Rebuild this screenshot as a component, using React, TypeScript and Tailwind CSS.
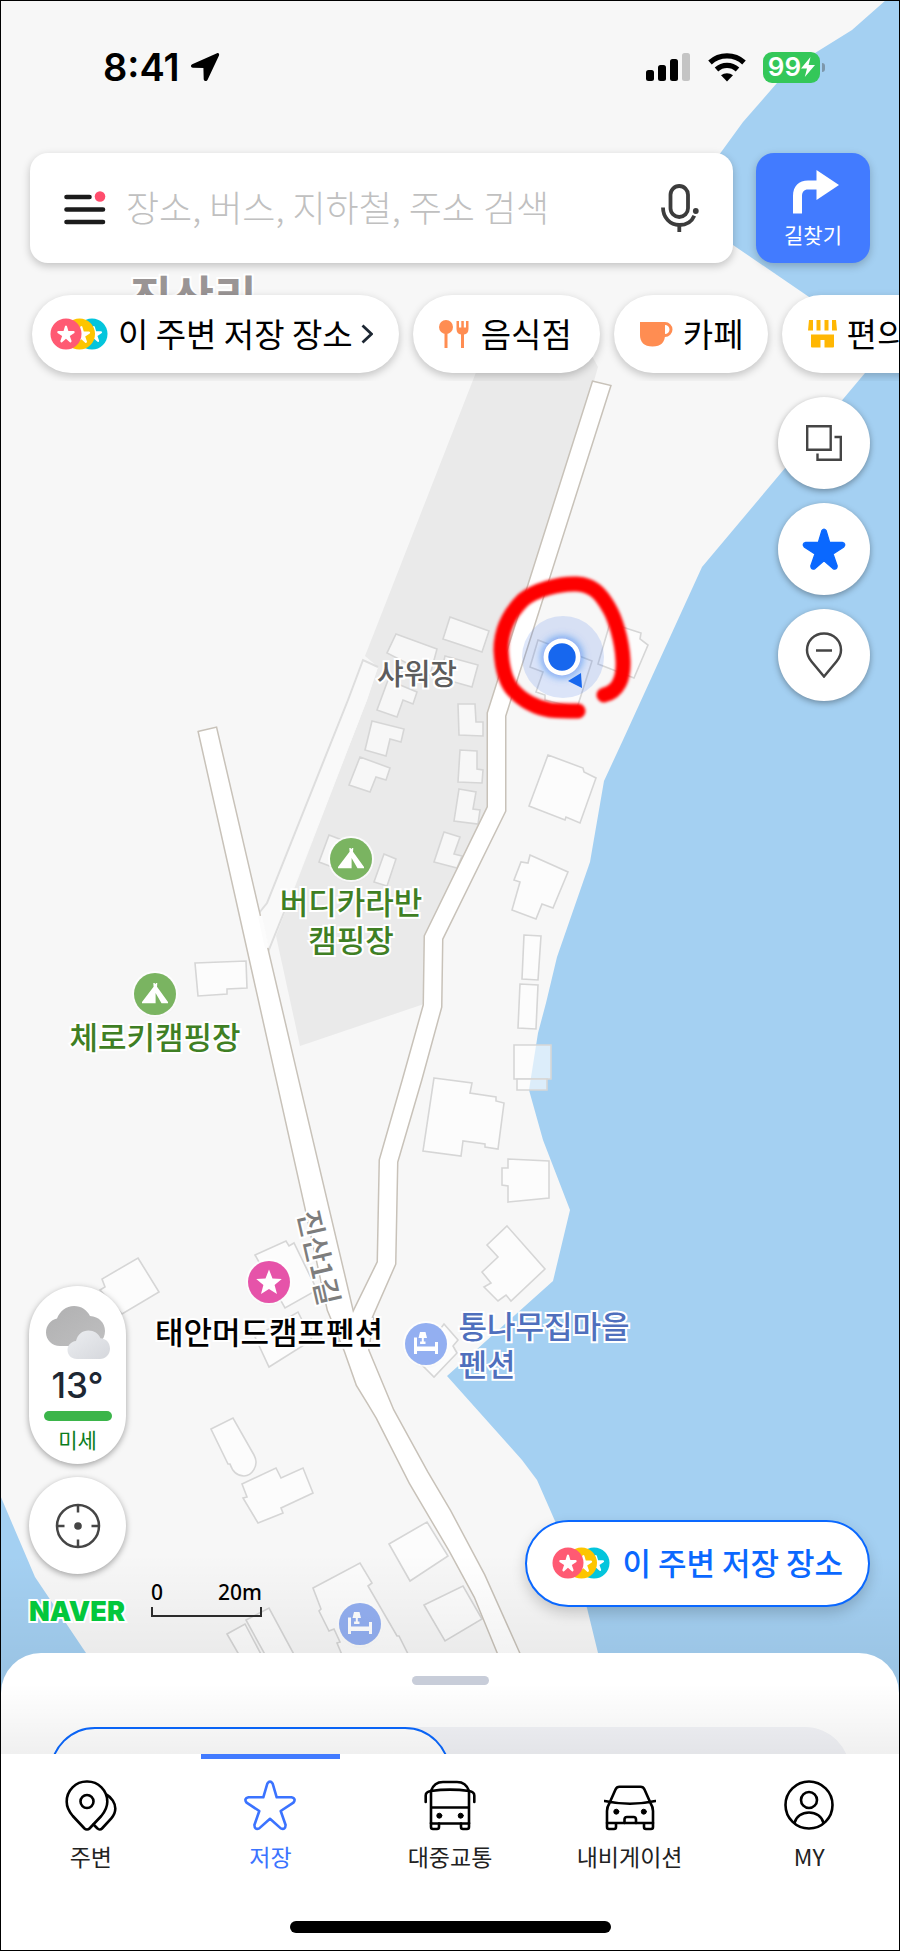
import React, { useState } from 'react';
import clsx from 'clsx';

const MAP_WIDTH = 898;
const MAP_HEIGHT = 1753;

const STAR =
  'M23.4 4.4Q26 .8 28.6 4.4L32.7 18.3H47.5Q52.5 19.6 49.4 23.6L36.7 32 41.6 46Q41.4 51.2 36.8 49.4L26 39.8 15.2 49.4Q10.6 51.2 10.4 46L15.3 32 2.6 23.6Q-.5 19.6 4.5 18.3H19.3Z';

const water = [
  'M886 0 852 30 815 53 777 83 743 122 719 155 705 185 733 245 885 349 865 373 702 567 623 740 604 781 590 862 557 957 546 1003 538 1033 529 1090 543 1140 570 1210 553 1281 447 1376 522 1460 537 1480 555 1521 587 1608 598 1653 612 1754H900V0Z',
  'M0 1495 35 1577 86 1653 120 1754H0Z',
];

const roads = [
  'M199 732 216 728 259 913 268 952 298 1080 353 1313 373 1318 368 1350 393 1410 427 1472 450 1511 484 1575 519 1653 540 1700H518L498 1653 475 1597 450 1551 410 1483 377 1418 368 1403 357 1385 345 1351 328 1310 305 1205 277 1080Z',
  'M593 382 610 386 505 716V811L442 939 441 1007 421 1080 397 1162 395 1264 366 1330 340 1340 353 1313 378 1262 380 1160 403 1080 424 1005 425 936 488 807V713Z',
];

const buildings = [
  '450,617 489,631 482,652 443,639',
  '396,634 437,649 430,675 387,653',
  '445,656 478,665 472,687 440,678',
  '388,680 417,692 413,704 403,700 397,717 377,710',
  '372,721 404,729 401,742 390,739 386,756 365,750',
  '360,757 390,768 386,780 376,777 370,792 349,785',
  '458,704 475,704 476,722 483,722 483,736 459,735',
  '460,750 477,751 477,769 483,770 482,783 458,782',
  '459,789 476,792 473,809 480,810 478,824 454,821',
  '444,832 460,837 454,854 462,856 457,868 434,862',
  '548,755 583,768 584,772 596,778 580,823 566,817 565,820 529,806',
  '530,855 568,872 553,908 542,904 536,919 512,910 520,882 514,880 521,862 528,863',
  '524,935 541,936 538,980 522,979',
  '520,984 538,985 536,1029 518,1028',
  '514,1045 551,1045 551,1079 514,1079',
  '517,1079 547,1079 547,1090 517,1090',
  '434,1078 472,1083 470,1093 496,1097 496,1101 504,1103 498,1149 485,1147 485,1144 463,1141 461,1156 423,1151',
  '508,1159 549,1161 549,1198 508,1202 508,1186 502,1185 502,1168 508,1168',
  '507,1226 545,1269 511,1301 506,1295 498,1301 484,1287 491,1283 482,1272 498,1257 487,1245',
  '444,1324 458,1340 453,1346 457,1353 434,1377 417,1360',
  '610,623 641,633 640,639 648,645 634,678 598,664',
  '538,640 592,661 577,708 545,700 545,695 536,692 543,672 530,667',
  '195,963 246,961 247,988 227,989 227,994 198,996',
  '329,835 350,843 340,870 319,862',
  '384,854 396,859 387,886 374,882',
  '138,1258 159,1292 122,1314 100,1290 105,1287 102,1279',
  '255,1255 286,1241 289,1246 294,1243 317,1290 285,1308',
  '255,1337 298,1312 312,1340 269,1367',
  '242,1484 276,1468 281,1478 303,1468 313,1493 281,1508 283,1513 258,1523 243,1498 247,1497',
  '389,1544 427,1522 448,1556 410,1581',
  '424,1605 463,1586 482,1619 445,1641',
  '313,1588 360,1563 372,1583 368,1586 397,1636 399,1636 412,1662 345,1662 337,1643 340,1642 334,1629 329,1631 319,1611 321,1609',
  '246,1620 269,1608 297,1660 268,1660',
  '227,1634 245,1624 264,1660 242,1660',
];

type PinKind = 'tent' | 'bed' | 'star';

const pins: { id: number; kind: PinKind; x: number; y: number; name: string }[] = [
  { id: 1, kind: 'tent', x: 351, y: 859, name: '버디카라반 캠핑장' },
  { id: 2, kind: 'tent', x: 155, y: 994, name: '체로키캠핑장' },
  { id: 3, kind: 'star', x: 269, y: 1282, name: '태안머드캠프펜션' },
  { id: 4, kind: 'bed', x: 426, y: 1344, name: '통나무집마을 펜션' },
  { id: 5, kind: 'bed', x: 360, y: 1624, name: '숙소' },
];

const labels = [
  { id: 1, x: 193, y: 294, lines: ['진산리'], className: 'text-[46px] leading-[48px] font-bold text-[#9a9595]' },
  { id: 2, x: 417, y: 672, lines: ['샤워장'], className: 'text-[29px] leading-[38px] font-medium text-[#5c5c5c]' },
  { id: 3, x: 351, y: 920, lines: ['버디카라반', '캠핑장'], className: 'text-[31px] leading-[38px] font-medium text-[#3f7f24]' },
  { id: 4, x: 155, y: 1036, lines: ['체로키캠핑장'], className: 'text-[31px] leading-[38px] font-medium text-[#3f7f24]' },
  { id: 5, x: 269, y: 1331, lines: ['태안머드캠프펜션'], className: 'text-[31px] leading-[38px] font-medium text-black' },
  { id: 6, x: 544, y: 1344, lines: ['통나무집마을', '펜션'], className: 'text-left text-[31px] leading-[38px] font-medium text-[#4f6fbd]' },
];

const toPercent = (x: number, y: number) => ({
  left: `${((x - 1) / MAP_WIDTH) * 100}%`,
  top: `${((y - 1) / MAP_HEIGHT) * 100}%`,
});

function PinIcon({ kind }: { kind: PinKind }) {
  if (kind === 'tent') {
    return (
      <svg viewBox="0 0 42 42" className="w-[42px] h-[42px]">
        <circle cx="21" cy="21" r="21" fill="#7ab461" />
        <path d="M19.3 10h1.2l.8 1 .9-1h1.1l-.3 3.8L34 29v1.2h-6.5L21.6 20v10.2H8V29l11.6-15.2z" fill="#fff" />
      </svg>
    );
  }
  if (kind === 'star') {
    return (
      <svg viewBox="0 0 42 42" className="w-[42px] h-[42px]">
        <circle cx="21" cy="21" r="21" fill="#e653a9" />
        <path d="m21 8.5 3.5 8.9 9.3.6-7.2 6 2.4 9.1-8-5.1-8 5.1 2.4-9.1-7.2-6 9.3-.6z" fill="#fff" />
      </svg>
    );
  }
  return (
    <svg viewBox="0 0 42 42" className="w-[42px] h-[42px]">
      <circle cx="21" cy="21" r="21" fill="#93aff1" />
      <path d="M9 14.5h3v9h18V19h3v12h-3v-3H12v3H9zM15 9h5.5l1.5 6h-3.2v3.5h1.7V21h-5.4v-2.500h1.700V15h-3.300z" fill="#fff" />
    </svg>
  );
}

function MapCanvas() {
  return (
    <div className="absolute inset-0 overflow-hidden">
      <svg viewBox={`1 1 ${MAP_WIDTH} ${MAP_HEIGHT}`} preserveAspectRatio="xMidYMin slice" className="w-full h-full">
        <defs>
          <filter id="soft" x="-20%" y="-20%" width="140%" height="140%">
            <feGaussianBlur stdDeviation="1.8" />
          </filter>
          <filter id="glow" x="-50%" y="-50%" width="200%" height="200%">
            <feGaussianBlur stdDeviation="4" />
          </filter>
        </defs>
        {water.map((d) => (
          <path key={d} d={d} fill="#a4d0f2" />
        ))}
        <path d="M484 352 590 352 598 367 560 500 488 713 490 805 425 936 424 1004 300 1046 276 936 367 700 378 667 365 656Z" fill="#eaeaea" />
        <path d="M363 660 378 667 367 700 293 890 268 952 259 913 267 903 348 700Z" fill="#f9f9f9" />
        <path d="M378 667 363 660 348 700 267 903 259 913M268 952 293 890" fill="none" stroke="#dedede" strokeWidth="2" />
        <g fill="#fff" fillOpacity=".62" stroke="#d6d6d6" strokeWidth="1.6">
          {buildings.map((points) => (
            <polygon key={points} points={points} />
          ))}
          <path d="M211 1429 233 1418 254 1455C260 1466 251 1476 244 1476 236 1476 232 1470 230 1464L228 1464Z" />
        </g>
        <g stroke="#c8c2b9" strokeWidth="3" fill="none">
          {roads.map((d) => (
            <path key={d} d={d} />
          ))}
        </g>
        {roads.map((d) => (
          <path key={d} d={d} fill="#fff" />
        ))}
        <path d="M260 916 267 948" stroke="#fcfcfc" strokeWidth="4" />
        <text
          transform="translate(321 1257) rotate(77)"
          textAnchor="middle"
          dominantBaseline="central"
          fontSize="29"
          fontWeight="500"
          fontFamily='"Noto Sans CJK KR", sans-serif'
          fill="#7d7d7d"
          stroke="#fff"
          strokeWidth="4"
          paintOrder="stroke"
        >
          진산1길
        </text>

        {/* current position */}
        <circle cx="563" cy="657" r="41" fill="#2f6be8" fillOpacity=".16" />
        <circle cx="562" cy="657" r="20" fill="#1767ee" fillOpacity=".6" filter="url(#glow)" />
        <circle cx="562" cy="657" r="18.5" fill="#fff" />
        <circle cx="562" cy="657" r="13.7" fill="#1767ee" />
        <path d="M568 681 581 673 582 688Z" fill="#1767ee" />
        <path
          d="M604 695C618 692 624 678 623 660 622 640 615 618 609 608 600 592 592 585 577 584 560 583 535 590 523 600 508 615 501 630 501 650 502 668 505 682 514 691 522 700 536 708 550 710 560 711 568 711 578 711"
          fill="none"
          stroke="#fe0000"
          strokeWidth="15"
          strokeLinecap="round"
          filter="url(#soft)"
        />
      </svg>

      {labels.map((label) => (
        <p
          key={label.id}
          style={toPercent(label.x, label.y)}
          className={clsx(
            'absolute -translate-x-1/2 -translate-y-1/2 text-center whitespace-nowrap [-webkit-text-stroke:4px_#fff] [paint-order:stroke_fill]',
            label.className
          )}
        >
          {label.lines.map((line) => (
            <span key={line} className="block">{line}</span>
          ))}
        </p>
      ))}
      {pins.map((pin) => (
        <button
          key={pin.id}
          aria-label={pin.name}
          style={toPercent(pin.x, pin.y)}
          className="absolute -translate-x-1/2 -translate-y-1/2 rounded-full ring-2 ring-white/80 shadow-sm"
        >
          <PinIcon kind={pin.kind} />
        </button>
      ))}
      <div className="absolute inset-x-0 bottom-0 h-[200px] bg-linear-to-b from-transparent to-black/10" />
    </div>
  );
}

function StatusBar() {
  return (
    <div className="h-[152px] pt-[41px] pl-[102px] pr-[74px]">
      <div className="flex h-[50px] items-center justify-between">
        <div className="flex items-center gap-2.5 font-[Inter] text-[38px] font-semibold text-black">
          <span>8:41</span>
          <svg viewBox="0 0 30 30" className="w-[30px] h-[30px]">
            <path d="M27 1.2 2.2 12.3C.2 13.3.8 15.6 2.8 15.7l10.6.3.3 11c.1 2.3 3 2.8 3.9.8L29 3.4C29.6 1.8 28.5.6 27 1.2z" />
          </svg>
        </div>
        <div className="flex items-center gap-[17px]">
          <svg viewBox="0 0 46 30" className="w-[46px] h-[30px]">
            <rect x="1" y="18" width="8" height="11" rx="2.5" />
            <rect x="13" y="13" width="8" height="16" rx="2.5" />
            <rect x="25" y="7" width="8" height="22" rx="2.5" />
            <rect x="37" y="1" width="8" height="28" rx="2.5" fill="#c4c4c4" />
          </svg>
          <svg viewBox="0 0 38 29" className="w-[38px] h-[29px]">
            <path d="M2 9.5C11.5.7 26.5.7 36 9.5" fill="none" stroke="#000" strokeWidth="5.2" />
            <path d="M8.5 16.500c6-5.500 15-5.500 21 0" fill="none" stroke="#000" strokeWidth="5.2" />
            <path d="M19 28.500 13 22.300c3.400-2.900 8.600-2.900 12 0z" />
          </svg>
          <div className="flex items-center gap-0.5">
            <div className="flex h-[31px] w-[57px] items-center justify-center rounded-[9px] bg-[#34c759] font-[Inter] text-[26px] leading-none font-semibold text-white">
              99
              <svg viewBox="0 0 14 20" className="w-[14px] h-[20px]" fill="#fff">
                <path d="M9.5 0 0 11.500h6L3.800 20 14 8H7.600z" />
              </svg>
            </div>
            <span className="h-[9px] w-[3px] rounded-r-full bg-[#7d97ab]" />
          </div>
        </div>
      </div>
    </div>
  );
}

function SavedCoins() {
  return (
    <svg viewBox="0 0 58 32" className="w-[58px] h-[32px] shrink-0">
      <circle cx="42" cy="16" r="15.5" fill="#04c5dc" />
      <path transform="translate(35 7) scale(.34)" d={STAR} fill="#fff" />
      <circle cx="29.5" cy="16" r="15.5" fill="#fdc500" />
      <path transform="translate(22 7) scale(.36)" d={STAR} fill="#fff" />
      <circle cx="16" cy="16" r="15.5" fill="#ff5a73" />
      <path transform="translate(6.6 6.5) scale(.36)" d={STAR} fill="#fff" />
    </svg>
  );
}

function SearchHeader() {
  return (
    <header className="flex gap-[23px] px-[29px]">
      <form className="flex h-[110px] min-w-0 flex-1 items-center gap-5 rounded-[18px] bg-white px-[34px] shadow-[0_3px_8px_rgba(0,0,0,0.22)]">
        <button type="button" aria-label="메뉴" className="shrink-0">
          <svg viewBox="0 0 42 34" className="w-[42px] h-[34px]">
            <path d="M2.500 6h23M2.500 18.500H39M2.500 31H39" stroke="#1b1b1b" strokeWidth="4.6" strokeLinecap="round" />
            <circle cx="36" cy="5.5" r="5.3" fill="#ff4d6d" />
          </svg>
        </button>
        <input
          type="text"
          aria-label="검색"
          placeholder="장소, 버스, 지하철, 주소 검색"
          className="min-w-0 flex-1 bg-transparent pb-1 text-[36px] font-light text-black outline-none placeholder:text-[#c0c0c0]"
        />
        <button type="button" aria-label="음성 검색" className="shrink-0">
          <svg viewBox="0 0 38 48" className="w-[38px] h-[48px]" fill="none" stroke="#3c3c3c" strokeWidth="3.8">
            <rect x="9.5" y="2" width="17.5" height="31" rx="8.7" />
            <path d="M2 23.500c0 10 7 17.500 16.300 17.500 7 0 12.500-3.500 15-9.300M18.300 41v7" />
            <circle cx="34.8" cy="27" r="2.9" fill="#3c3c3c" stroke="none" />
          </svg>
        </button>
      </form>
      <button className="flex h-[110px] w-[114px] shrink-0 flex-col items-center rounded-[18px] bg-[#427bff] pt-[17px] text-white shadow-[0_3px_8px_rgba(0,0,0,0.22)]">
        <svg viewBox="-6 0 52 44" className="w-[52px] h-[44px]" fill="#fff">
          <path d="M0 43.500V26C0 16 6 10.500 15 10.500h8.500V0L46 15 23.500 30V19.500H15c-4 0-6 2.500-6 6.500v17.500z" />
        </svg>
        <span className="mt-1.5 text-[21px] leading-7">길찾기</span>
      </button>
    </header>
  );
}

const chipClass =
  'flex h-[78px] shrink-0 items-center gap-[10px] rounded-full bg-white text-[33px] whitespace-nowrap text-black shadow-[0_3px_8px_rgba(0,0,0,0.22)]';

function CategoryChips() {
  return (
    <div className="mt-6 flex gap-[14px] overflow-hidden py-2 pl-[31px]">
      <button className={clsx(chipClass, 'pr-[26px] pl-[18px]')}>
        <SavedCoins />
        <span className="flex items-center gap-2">
          이 주변 저장 장소
          <svg viewBox="0 0 12 20" className="w-[12px] h-[20px]" fill="none" stroke="#1d2733" strokeWidth="2.8">
            <path d="m1.500 1.500 9 8.500-9 8.500" />
          </svg>
        </span>
      </button>
      <button className={clsx(chipClass, 'pr-7 pl-[26px]')}>
        <svg viewBox="0 0 32 28" className="w-[32px] h-[28px]" fill="#ff8d52">
          <circle cx="7" cy="7" r="7" />
          <path d="M5.500 12h3v16h-3zM17.500 1h2.500v6.500h2.300V1h2.500v6.500H27V1h2.500v8c0 3.500-1.800 5-4.500 5.500V28h-3V14.500c-2.700-.5-4.500-2-4.500-5.500z" />
        </svg>
        음식점
      </button>
      <button className={clsx(chipClass, 'pr-6 pl-[26px]')}>
        <svg viewBox="0 0 33 26" className="w-[33px] h-[26px]" fill="#ff8d52">
          <path d="M0 1h25v13c0 7-4 11.500-12.500 11.500S0 21 0 14z" />
          <circle cx="25" cy="8.5" r="6" fill="none" stroke="#ff8d52" strokeWidth="3" />
        </svg>
        카페
      </button>
      <button className={clsx(chipClass, 'pr-7 pl-[26px]')}>
        <svg viewBox="0 0 29 28" className="w-[29px] h-[28px]" fill="#ffb703">
          <path d="M1 0h4v10.500H0zM8.500 0h4v10.500h-4zM16.500 0h4v10.500h-4zM24 0h4l1 10.500h-5z" />
          <path d="M3 14.500h23v12q0 1-1 1h-8.500V20h-4v7.500H4q-1 0-1-1z" />
        </svg>
        편의점
      </button>
    </div>
  );
}

const roundClass = 'flex items-center justify-center rounded-full bg-white shadow-[0_2px_6px_rgba(0,0,0,0.35)]';

function MapControls() {
  return (
    <div className="mt-4 flex flex-col items-end gap-[14px] pr-[29px]">
      <button aria-label="지도 레이어" className={clsx(roundClass, 'h-[92px] w-[92px]')}>
        <svg viewBox="0 0 36 36" className="w-[36px] h-[36px]" fill="none" stroke="#454545" strokeWidth="2.4">
          <path d="M1.200 1.200h23.500v23.500H1.200zM28.500 12h6.300v22.800H11.500v-6.300" />
        </svg>
      </button>
      <button aria-label="저장 장소 표시" className={clsx(roundClass, 'h-[92px] w-[92px]')}>
        <svg viewBox="0 0 52 52" className="w-[44px] h-[44px]">
          <path d={STAR} fill="#0a68ff" stroke="#0a68ff" strokeWidth="1.5" />
        </svg>
      </button>
      <button aria-label="장소 숨기기" className={clsx(roundClass, 'h-[92px] w-[92px]')}>
        <svg viewBox="0 0 38 46" className="w-[38px] h-[46px]" fill="none" stroke="#454545" strokeWidth="2.5">
          <path d="M19 1.500c10 0 17 7.500 17 16.500 0 5-2 8.500-4.500 11.500L19 44.500 6.500 29.500C4 26.500 2 23 2 18 2 9 9 1.500 19 1.500zM11 18.500h16" />
        </svg>
      </button>
    </div>
  );
}

function WeatherCard() {
  return (
    <div className="flex w-[97px] flex-col items-center rounded-full bg-white pt-5 pb-[13px] shadow-[0_2px_6px_rgba(0,0,0,0.35)]">
      <svg viewBox="0 0 64 53" className="w-[64px] h-[53px]">
        <defs>
          <linearGradient id="cloud-back" x1="0" y1="0" x2="1" y2="1">
            <stop offset="0" stopColor="#b0b0b1" />
            <stop offset="1" stopColor="#bfbfc0" />
          </linearGradient>
          <linearGradient id="cloud-front" x1="0" y1="0" x2="1" y2="1">
            <stop offset="0" stopColor="#eceef1" />
            <stop offset="1" stopColor="#d5d7dc" />
          </linearGradient>
        </defs>
        <path d="M14 40C6 40 0 34 0 26.500 0 19.500 4.500 14 11 12.500 14 5 20 0 28 0c7.500 0 13 4 16 10 9 .5 15 7 15 15 0 9-7 15-16 15z" fill="url(#cloud-back)" />
        <path d="M31 53c-5.500 0-9.500-4-9.500-9 0-4.500 3.500-8.500 8.500-9 1.500-6.500 6.500-10.500 12.500-10.500 5.500 0 10 3 12 7.800C60 32.500 64 37 64 42.500 64 48.500 59.500 53 54 53z" fill="url(#cloud-front)" />
      </svg>
      <strong className="mt-1.5 font-[Inter] text-[35px] leading-10 font-medium text-[#1d2733]">13°</strong>
      <span className="mt-1.5 h-[10px] w-[68px] rounded-full bg-[#3bb54a]" />
      <span className="mt-1.5 text-[21px] leading-6 text-[#0b7d1c]">미세</span>
    </div>
  );
}

function BottomControls() {
  return (
    <div className="flex items-end justify-between pr-[29px] pb-[30px] pl-7">
      <div className="flex flex-col gap-[13px]">
        <WeatherCard />
        <button aria-label="현재 위치" className={clsx(roundClass, 'h-[97px] w-[97px]')}>
          <svg viewBox="0 0 46 46" className="w-[46px] h-[46px]" fill="none" stroke="#454545" strokeWidth="2.5">
            <circle cx="23" cy="23" r="21" />
            <path d="M23 2v7.500M23 36.500V44M2 23h7.500M36.500 23H44" />
            <circle cx="23" cy="23" r="3.8" fill="#454545" stroke="none" />
          </svg>
        </button>
        <div className="-mt-2 flex items-start gap-[26px]">
          <span className="mt-[22px] w-24 font-[Inter] text-[27px] leading-[22px] font-black text-[#03c73c] [-webkit-text-stroke:4px_#fff] [paint-order:stroke_fill]">
            NAVER
          </span>
          <div className="w-[111px] pt-px font-[Noto_Sans] text-[21px] leading-[25px] font-medium text-black">
            <div className="flex justify-between">
              <span>0</span>
              <span>20m</span>
            </div>
            <div className="mt-0.5 h-[10px] border-x-2 border-b-2 border-[#2b2b2b]" />
          </div>
        </div>
      </div>
      <button className="mb-4 flex h-[87px] items-center gap-3 rounded-full border-2 border-[#0a68ff] bg-white px-[25px] pb-0.5 text-[31px] font-medium whitespace-nowrap text-[#0a68ff] shadow-[0_6px_14px_rgba(0,0,0,0.18)]">
        <SavedCoins />
        이 주변 저장 장소
      </button>
    </div>
  );
}

function BottomSheet() {
  return (
    <section className="relative h-[101px] overflow-hidden rounded-t-[40px] bg-white">
      <div className="mx-auto mt-[23px] h-[9px] w-[77px] rounded-full bg-[#c8cdd9]" />
      <div className="mx-[49px] mt-[42px] flex h-[90px] rounded-full bg-[#f2f3f7]">
        <button aria-label="저장 목록" className="h-full w-1/2 rounded-full border-2 border-[#0a68ff] bg-white" />
      </div>
      <div className="pointer-events-none absolute inset-0 bg-linear-to-b from-transparent from-30% to-black/6" />
    </section>
  );
}

const tabs = [
  {
    id: 'nearby',
    label: '주변',
    icon: (
      <>
        <path d="M22 2.500a20 20 0 0 1 20.300 20.300c0 6-2.500 10-6 14.200L24.500 49.500a3.500 3.500 0 0 1-5 0L7.800 37C4.200 32.800 1.700 28.800 1.700 22.800A20 20 0 0 1 22 2.500z" />
        <circle cx="22" cy="22.5" r="6.5" />
        <path d="M42 16c4.500 2.500 8.300 8 8.300 13.500 0 4.500-1.500 7-4 9.800L37 49.500a3 3 0 0 1-4.500 0L28.500 45.500" />
      </>
    ),
  },
  { id: 'saved', label: '저장', icon: <path d={STAR} /> },
  {
    id: 'transit',
    label: '대중교통',
    icon: (
      <>
        <path d="M7 12C9 6 13 3 19 3h14c6 0 10 3 12 9v32.500H7zM7 12c12-1.700 26-1.700 38 0M7 28.500h38" />
        <path d="M7 12c-3.500.5-5.300 1.500-5.300 4.500V23M45 12c3.500.5 5.300 1.500 5.300 4.500V23M7 44v4q0 2 2 2h4q2 0 2-2v-3.500M45 44v4q0 2-2 2h-4q-2 0-2-2v-3.500" />
        <circle cx="15.3" cy="36.7" r="2.5" fill="currentColor" strokeWidth="1" />
        <circle cx="36.7" cy="36.7" r="2.5" fill="currentColor" strokeWidth="1" />
      </>
    ),
  },
  {
    id: 'navigation',
    label: '내비게이션',
    icon: (
      <>
        <path d="M5.500 24 11.500 10.500q1.200-2.700 4-2.700h21q2.800 0 4 2.700L46.500 24q2.500 4 2.500 8v12H3V32q0-4 2.500-8zM.5 22c16 3.400 35 3.400 51 0" />
        <path d="M3 44v4q0 2 2 2h5q2 0 2-2v-3.500M49 44v4q0 2-2 2h-5q-2 0-2-2v-3.500M20.500 44v-3.500q0-2.500 2.500-2.500h6.500q2.500 0 2.500 2.500V44" />
        <circle cx="12.3" cy="32.7" r="2.5" fill="currentColor" strokeWidth="1" />
        <circle cx="39.8" cy="32.7" r="2.5" fill="currentColor" strokeWidth="1" />
      </>
    ),
  },
  {
    id: 'my',
    label: 'MY',
    icon: (
      <>
        <circle cx="26" cy="26" r="23.5" />
        <circle cx="26" cy="21" r="8" />
        <path d="M11.500 44c1.500-6.500 7.500-10.500 14.500-10.500S39 37.500 40.500 44" />
      </>
    ),
  },
];

function TabBar() {
  const [active, setActive] = useState('saved');

  return (
    <nav className="relative bg-white">
      <div className="grid grid-cols-5">
        {tabs.map((tab) => (
          <button
            key={tab.id}
            onClick={() => setActive(tab.id)}
            className={clsx('flex flex-col items-center', active === tab.id ? 'text-[#3b73ff]' : 'text-black')}
          >
            <span className={clsx('h-[5px] w-[139px] max-w-full', active === tab.id && 'bg-[#427bff]')} />
            <svg
              viewBox="0 0 52 52"
              className="mt-5 w-[52px] h-[52px]"
              fill="none"
              stroke="currentColor"
              strokeWidth="2.6"
              strokeLinejoin="round"
              strokeLinecap="round"
            >
              {tab.icon}
            </svg>
            <span className={clsx('mt-[9px] text-[23px] leading-8', active !== tab.id && 'text-[#222]')}>{tab.label}</span>
          </button>
        ))}
      </div>
      <div className="mx-auto mt-[49px] mb-[17px] h-[12px] w-[321px] rounded-full bg-black" />
    </nav>
  );
}

export default function App() {
  return (
    <div className="flex min-h-screen flex-col overflow-hidden border border-black font-['Noto_Sans_CJK_KR',sans-serif]">
      <main className="relative flex flex-1 flex-col bg-[#f7f7f7]">
        <MapCanvas />
        <div className="relative flex flex-1 flex-col">
          <StatusBar />
          <SearchHeader />
          <CategoryChips />
          <MapControls />
          <div className="min-h-10 flex-1" />
          <BottomControls />
        </div>
        <BottomSheet />
      </main>
      <TabBar />
    </div>
  );
}
